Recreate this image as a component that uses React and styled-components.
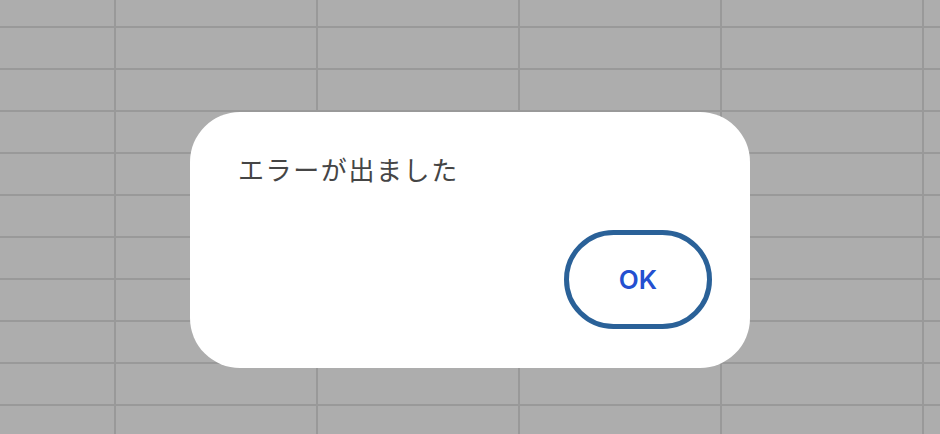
import React from "react";
import styled, { createGlobalStyle } from "styled-components";

const Global = createGlobalStyle`
  html, body { margin: 0; padding: 0; }
  body {
    width: 940px;
    height: 434px;
    overflow: hidden;
    background: #adadad;
    font-family: "Noto Sans CJK JP", "Noto Sans", sans-serif;
  }
`;

const Page = styled.div`
  position: relative;
  width: 940px;
  height: 434px;
  overflow: hidden;
  background: #adadad;
`;

const Sheet = styled.div`
  display: grid;
  grid-template-columns: repeat(6, 200px);
  grid-auto-rows: 40px;
  gap: 2px;
  margin: -14px 0 0 -86px;
  width: max-content;
  background: #999999;
`;

const Cell = styled.div`
  background: #adadad;
`;

const Dialog = styled.div`
  position: absolute;
  left: 190px;
  top: 112px;
  width: 560px;
  height: 256px;
  box-sizing: border-box;
  background: #ffffff;
  border-radius: 50px;
  padding: 42px 38px 39px 48px;
  display: flex;
  flex-direction: column;
  justify-content: space-between;
`;

const Message = styled.p`
  margin: 0;
  font-family: "Noto Sans CJK JP", sans-serif;
  font-size: 26px;
  line-height: 30px;
  color: #454545;
  letter-spacing: 1.6px;
`;

const Actions = styled.div`
  display: flex;
  justify-content: flex-end;
`;

const Button = styled.button`
  width: 148px;
  height: 99px;
  box-sizing: border-box;
  border: 5px solid #2a6198;
  border-radius: 50px;
  background: #ffffff;
  color: #2450d0;
  font-family: Inter, Roboto, sans-serif;
  font-weight: 600;
  font-size: 26px;
  padding: 0;
  cursor: pointer;
`;

export default function App() {
  const cells = Array.from({ length: 6 * 12 });
  return (
    <Page>
      <Global />
      <Sheet>
        {cells.map((_, i) => (
          <Cell key={i} />
        ))}
      </Sheet>
      <Dialog role="alertdialog">
        <Message>エラーが出ました</Message>
        <Actions>
          <Button>OK</Button>
        </Actions>
      </Dialog>
    </Page>
  );
}
